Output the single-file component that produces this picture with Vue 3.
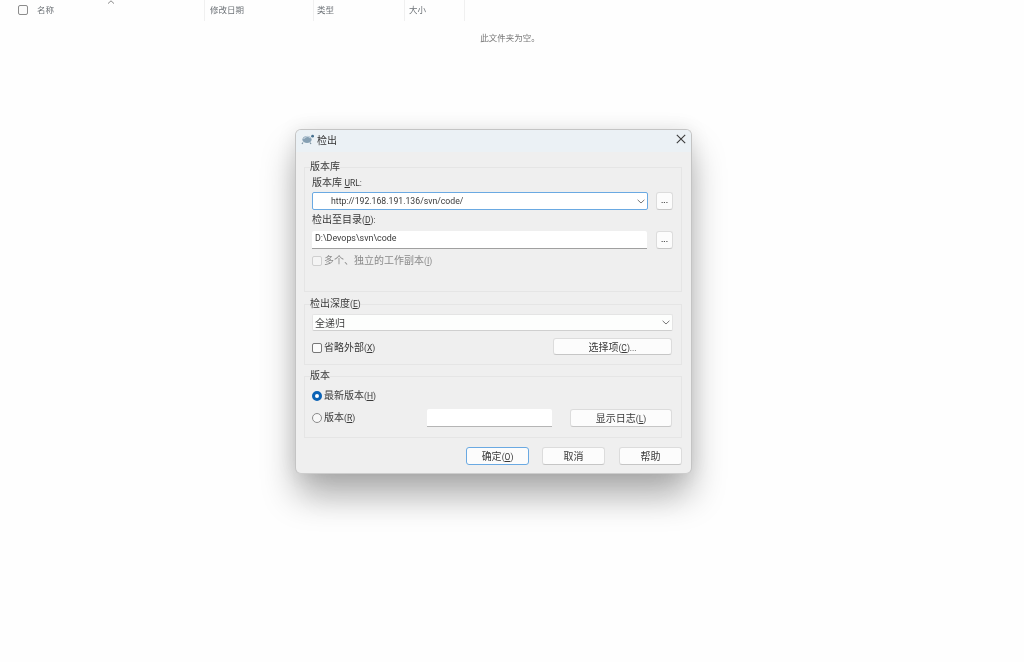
<script setup>
const columns = [
  { label: '名称', width: 205, pad: 37 },
  { label: '修改日期', width: 109, pad: 5 },
  { label: '类型', width: 91, pad: 3 },
  { label: '大小', width: 60, pad: 4 },
]
</script>

<template>
  <div class="page">
    <header class="list-head">
      <span class="head-check"></span>
      <svg class="sort" width="8" height="4" viewBox="0 0 8 4"><path d="M1 3.600 4 .8l3 2.800" fill="none" stroke="#8a8a8a" stroke-width="1"/></svg>
      <div v-for="c in columns" :key="c.label" class="col" :style="{ width: c.width + 'px', paddingLeft: c.pad + 'px' }">{{ c.label }}</div>
    </header>
    <p class="empty">此文件夹为空。</p>

    <section class="dialog">
      <div class="titlebar">
        <svg class="turtle" width="14" height="12" viewBox="0 0 14 12">
          <ellipse cx="6" cy="6.500" rx="4.600" ry="3.600" fill="#86a0b3"/>
          <path d="M2.500 6 Q6 1.500 9.500 5" fill="none" stroke="#c4d3de" stroke-width="1.200"/>
          <circle cx="11.600" cy="3.200" r="1.400" fill="#44708f"/>
          <path d="M2 9.500 1 11M9 9.500l1 1.500" stroke="#7a91a0" stroke-width="1.200"/>
        </svg>
        <span class="title">检出</span>
        <svg class="close" width="10" height="10" viewBox="0 0 10 10"><path d="M.8.8l8.400 8.400M9.200.8.8 9.200" stroke="#3c3c3c" stroke-width="1.100" fill="none"/></svg>
      </div>

      <div class="body">
        <fieldset class="group group-repo">
          <legend>版本库</legend>
          <label class="field-label">版本库 <span class="key"><u>U</u>RL:</span></label>
          <div class="path-row">
            <div class="combo focus url">
              <span class="latin">http://192.168.191.136/svn/code/</span>
              <svg class="chev" width="8" height="5" viewBox="0 0 8 5"><path d="M.6.8 4 4l3.400-3.200" fill="none" stroke="#777" stroke-width="1"/></svg>
            </div>
            <button class="btn dots">...</button>
          </div>
          <label class="field-label second">检出至目录<span class="key">(<u>D</u>):</span></label>
          <div class="path-row wide-gap">
            <div class="text-input path-value">D:\Devops\svn\code</div>
            <button class="btn dots tall">...</button>
          </div>
          <div class="check-row disabled">
            <span class="check"></span>
            <span>多个、独立的工作副本<span class="key">(<u>I</u>)</span></span>
          </div>
        </fieldset>

        <fieldset class="group group-depth">
          <legend>检出深度<span class="key">(<u>E</u>)</span></legend>
          <div class="combo plain">
            <span>全递归</span>
            <svg class="chev" width="8" height="5" viewBox="0 0 8 5"><path d="M.6.8 4 4l3.400-3.200" fill="none" stroke="#777" stroke-width="1"/></svg>
          </div>
          <div class="depth-row">
            <div class="check-row">
              <span class="check dark"></span>
              <span>省略外部<span class="key">(<u>X</u>)</span></span>
            </div>
            <button class="btn options">选择项<span class="key">(<u>C</u>)...</span></button>
          </div>
        </fieldset>

        <fieldset class="group group-rev">
          <legend>版本</legend>
          <div class="check-row">
            <span class="radio on"></span>
            <span>最新版本<span class="key">(<u>H</u>)</span></span>
          </div>
          <div class="rev-row">
            <div class="check-row rev-label">
              <span class="radio"></span>
              <span>版本<span class="key">(<u>R</u>)</span></span>
            </div>
            <div class="text-input rev-input"></div>
            <button class="btn log">显示日志<span class="key">(<u>L</u>)</span></button>
          </div>
        </fieldset>

        <footer class="actions">
          <button class="btn act primary">确定<span class="key">(<u>O</u>)</span></button>
          <button class="btn act">取消</button>
          <button class="btn act">帮助</button>
        </footer>
      </div>
    </section>
  </div>
</template>

<style>
html, body { background: #fefefe; }
</style>

<style scoped>
* { box-sizing: border-box; }
.page {
  position: relative;
  width: 1024px;
  height: 662px;
  overflow: hidden;
  background: #fefefe;
  font-family: Roboto, "Noto Sans CJK SC", sans-serif;
  font-size: 10px;
  color: #3a3a3a;
  filter: blur(.35px);
}
.latin { font-size: 8.700px; }
.path-value { font-size: 8.900px; }
.key { font-size: 8.500px; }
.list-head {
  position: relative;
  display: flex;
  height: 21px;
  font-size: 8.500px;
  color: #6e7378;
}
.col {
  height: 21px;
  line-height: 20px;
  border-right: 1px solid #f0f0f0;
}
.head-check {
  position: absolute;
  left: 18px;
  top: 5px;
  width: 10px;
  height: 10px;
  border: 1px solid #8c8c8c;
  border-radius: 2px;
  background: #fbfbfb;
}
.sort { position: absolute; left: 107px; top: 0; }
.empty {
  margin: 11px 0 0;
  width: 1020px;
  text-align: center;
  font-size: 8.500px;
  line-height: 12px;
  color: #777;
}

.dialog {
  position: absolute;
  left: 295px;
  top: 129px;
  width: 397px;
  height: 345px;
  background: #efefef;
  border-radius: 6px;
  border: 1px solid #c4c4c4;
  border-bottom-color: #cdcdcd;
  box-shadow: 0 22px 34px rgba(0, 0, 0, .28), 0 0 20px rgba(0, 0, 0, .09), 0 44px 30px -20px rgba(0, 0, 0, .05);
}
.titlebar {
  display: flex;
  align-items: center;
  height: 22px;
  padding: 0 5px 4px 5px;
  background: #ebf1f5;
  border-radius: 5px 5px 0 0;
}
.turtle { flex: none; }
.title { margin-left: 2px; color: #333; }
.close { margin-left: auto; }
.body { padding: 8px 9px 0 8px; }

.group {
  margin: 0;
  min-width: 0;
  border: 1px solid #e5e5e5;
  padding: 0 8px 0 7px;
}
legend {
  margin-left: -2px;
  padding: 0;
  height: 14px;
  line-height: 14px;
  color: #3a3a3a;
}
u { text-underline-offset: 1px; }
.group-repo { padding-top: 3px; padding-bottom: 24px; }
.group-depth { margin-top: 5px; padding-top: 3px; padding-bottom: 9px; }
.group-rev { margin-top: 4px; padding-top: 7px; padding-bottom: 10px; }

.field-label { display: block; height: 12px; line-height: 12px; margin-bottom: 3px; }
.field-label.second { margin: 4px 0 5px; }
.path-row { display: flex; gap: 8px; }
.path-row.wide-gap { gap: 9px; }

.combo {
  display: flex;
  align-items: center;
  justify-content: space-between;
  flex: 1;
  min-width: 0;
  background: #fff;
  border-radius: 2px;
}
.combo.focus {
  height: 18px;
  border: 1px solid #6aa9e2;
  padding: 0 2px 0 18px;
}
.combo.plain {
  height: 17px;
  padding: 0 2px 0 2px;
  border: 1px solid #e4e4e4;
  border-bottom-color: #cfcfcf;
  background: #fdfefd;
}
.text-input {
  flex: 1;
  height: 18px;
  line-height: 15px;
  padding: 0 3px;
  background: #fff;
  border-bottom: 1px solid #a0a0a0;
  border-radius: 2px 2px 0 0;
}

.btn {
  font: inherit;
  color: #3a3a3a;
  background: #fcfcfc;
  border: 1px solid #dcdcdc;
  border-bottom-color: #c6c6c6;
  border-radius: 3px;
  padding: 0 0 1px;
}
.dots { flex: none; width: 17px; height: 18px; line-height: 16px; font-weight: 700; font-size: 8px; }
.dots.tall { height: 18px; }
.options { width: 119px; height: 17px; margin-right: 1px; }
.log { width: 102px; height: 18px; margin-left: 18px; margin-right: 1px; }
.act { width: 63px; height: 18px; }
.primary { border: 1px solid #6aa9e2; margin-right: -1px; }

.check-row { display: flex; align-items: center; gap: 2px; height: 12px; line-height: 12px; }
.check {
  flex: none;
  width: 10px;
  height: 10px;
  border: 1px solid #cfcfcf;
  border-radius: 2px;
  background: #f4f4f4;
}
.check.dark { border-color: #777; background: #fbfbfb; }
.disabled { margin-top: 6px; color: #8a8a8a; }
.depth-row {
  display: flex;
  align-items: center;
  justify-content: space-between;
  margin-top: 7px;
}
.depth-row .check-row { margin-top: 2px; }

.radio {
  flex: none;
  width: 10px;
  height: 10px;
  border: 1px solid #8b8b8b;
  border-radius: 50%;
  background: #f8f8f8;
}
.radio.on { border: 3px solid #0a62b5; background: #fff; }
.rev-row { display: flex; align-items: center; margin-top: 7px; }
.rev-label { width: 115px; }
.rev-input { flex: none; width: 125px; border-bottom-color: #b5b5b5; }

.actions {
  display: flex;
  justify-content: flex-end;
  gap: 14px;
  margin-top: 9px;
}
</style>
